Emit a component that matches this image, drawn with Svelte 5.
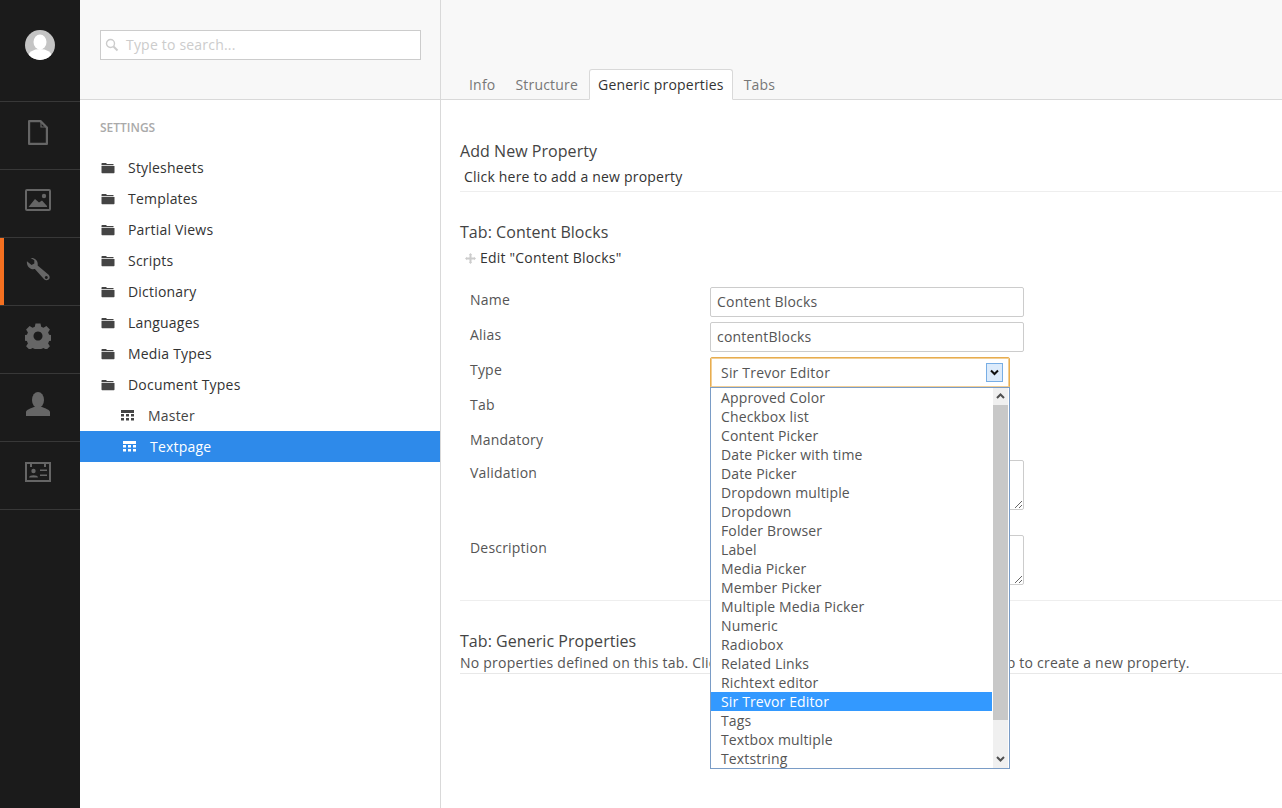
<script>
  const folders = ['Stylesheets', 'Templates', 'Partial Views', 'Scripts', 'Dictionary', 'Languages', 'Media Types', 'Document Types'];
  const tabs = ['Info', 'Structure', 'Generic properties', 'Tabs'];
  const options = ['Approved Color', 'Checkbox list', 'Content Picker', 'Date Picker with time', 'Date Picker', 'Dropdown multiple', 'Dropdown', 'Folder Browser', 'Label', 'Media Picker', 'Member Picker', 'Multiple Media Picker', 'Numeric', 'Radiobox', 'Related Links', 'Richtext editor', 'Sir Trevor Editor', 'Tags', 'Textbox multiple', 'Textstring'];
</script>

{#snippet gridIcon()}
  <svg class="grid-icon" width="13" height="11" viewBox="0 0 13 11" fill="currentColor">
    <rect x="0" y="0" width="13" height="3" />
    <rect x="0" y="4" width="3" height="2.500" /><rect x="5" y="4" width="3" height="2.500" /><rect x="10" y="4" width="3" height="2.500" />
    <rect x="0" y="8" width="3" height="2.500" /><rect x="5" y="8" width="3" height="2.500" /><rect x="10" y="8" width="3" height="2.500" />
  </svg>
{/snippet}

<div class="app">
  <nav class="rail">
    <div class="rail-top">
      <svg width="30" height="30" viewBox="0 0 30 30">
        <circle cx="15" cy="15" r="15" fill="#c4c4c4" />
        <clipPath id="av"><circle cx="15" cy="15" r="15" /></clipPath>
        <g clip-path="url(#av)" fill="#fff">
          <ellipse cx="15" cy="12" rx="6.500" ry="7.500" />
          <ellipse cx="15" cy="27" rx="12" ry="8" />
        </g>
      </svg>
    </div>
    <div class="rail-item">
      <svg width="20" height="25" viewBox="0 0 20 25" fill="none" stroke="#666" stroke-width="2.200">
        <path d="M1.100 1.100H12.500L18.900 7.500V23.900H1.100Z" stroke-linejoin="round" />
        <path d="M13 1.500V7H18.500" stroke-width="1.200" />
      </svg>
    </div>
    <div class="rail-item">
      <svg width="26" height="22" viewBox="0 0 26 22">
        <rect x="1" y="1" width="24" height="20" fill="none" stroke="#666" stroke-width="2" rx="1" />
        <circle cx="19" cy="7" r="2.200" fill="#666" />
        <path d="M3.500 18 L10 10 L14 13.500 L17 11.500 L22 17 V18Z" fill="#666" />
      </svg>
    </div>
    <div class="rail-item active">
      <svg width="24" height="24" viewBox="0 0 26 26">
        <path fill="#666" fill-rule="evenodd" d="M1 3.500 L6 7.500 L9 6 L9 2.500 L5 0 C9 -0.600 13.500 2.500 12.600 8 L24.500 18.200 C26.400 20 25.600 22.400 24.500 23.300 C23.200 24.400 21 24.600 19.600 23 L9.600 12 C4.500 13 0.400 9 1 3.500Z M22 19.600 a1.600 1.600 0 1 0 0.010 0Z" />
      </svg>
    </div>
    <div class="rail-item">
      <svg width="26" height="26" viewBox="0 0 26 26">
        <path fill="#666" fill-rule="evenodd" d="M10.500 0.500h5l.7 3.300 2.300 1 2.900 -1.800 3.500 3.500 -1.800 2.900 1 2.300 3.300 .7 v5 l-3.300 .7 -1 2.300 1.800 2.900 -3.500 3.500 -2.900 -1.800 -2.300 1 -.7 3.300 h-5 l-.7 -3.300 -2.300 -1 -2.900 1.800 -3.500 -3.500 1.800 -2.900 -1 -2.300 -3.300 -.7 v-5 l3.300 -.7 1 -2.300 -1.800 -2.900 3.500 -3.500 2.900 1.800 2.300 -1Z M13 8.500a4.500 4.500 0 1 0 .010 0Z" />
      </svg>
    </div>
    <div class="rail-item">
      <svg width="24" height="24" viewBox="0 0 24 24" fill="#666">
        <ellipse cx="12" cy="8" rx="6" ry="8" />
        <path d="M0 24V20C0 17.500 5 16.500 8 15L16 15C19 16.500 24 17.500 24 20V24Z" />
      </svg>
    </div>
    <div class="rail-item">
      <svg width="26" height="20" viewBox="0 0 26 20">
        <rect x="1" y="1" width="24" height="18" fill="none" stroke="#666" stroke-width="2" />
        <rect x="5" y="1" width="2" height="4" fill="#666" />
        <rect x="19" y="1" width="2" height="4" fill="#666" />
        <circle cx="8.500" cy="9" r="2.200" fill="#666" />
        <path d="M4 15.500 C4 12.500 13 12.500 13 15.500Z" fill="#666" />
        <rect x="15" y="7.500" width="7" height="1.500" fill="#666" />
        <rect x="15" y="12.500" width="7" height="1.500" fill="#666" />
      </svg>
    </div>
  </nav>

  <aside class="tree">
    <div class="tree-head">
      <div class="search">
        <svg width="14" height="14" viewBox="0 0 14 14" fill="none" stroke="#ccc">
          <circle cx="5.500" cy="5.500" r="4" stroke-width="1.400" />
          <path d="M8.500 8.500L12.500 12.500" stroke-width="2" />
        </svg>
        <span>Type to search...</span>
      </div>
    </div>
    <h5>SETTINGS</h5>
    <ul>
      {#each folders as f}
        <li>
          <svg width="14" height="12" viewBox="0 0 14 12" fill="#444">
            <path d="M1 1H5L6 2H12.500V3.200H0.500V1.500Z" />
            <path d="M0.500 4H13.500V10.500Q13.500 11.200 12.800 11.200H1.200Q0.500 11.200 0.500 10.500Z" />
          </svg>
          <span>{f}</span>
        </li>
      {/each}
      <li class="child">{@render gridIcon()}<span>Master</span></li>
      <li class="child selected">{@render gridIcon()}<span>Textpage</span></li>
    </ul>
  </aside>

  <main class="editor">
    <header class="tabs">
      {#each tabs as t, i}
        <div class="tab" class:on={i === 2}>{t}</div>
      {/each}
    </header>

    <section class="body">
      <div class="group add">
        <h4>Add New Property</h4>
        <p class="add-link">Click here to add a new property</p>
      </div>

      <div class="group blocks">
        <h4>Tab: Content Blocks</h4>
        <p class="edit-tab">
          <svg width="11" height="11" viewBox="0 0 11 11" fill="#ccc"><path d="M4.500 2H3.800L5.500 0L7.200 2H6.500V4.500H9V3.800L11 5.500L9 7.200V6.500H6.500V9H7.200L5.500 11L3.800 9H4.500V6.500H2V7.200L0 5.500L2 3.800V4.500H4.500Z" /></svg>
          Edit "Content Blocks"
        </p>
        <div class="form">
          <label for="p-name">Name</label>
          <input id="p-name" class="field" value="Content Blocks" />
          <label for="p-alias">Alias</label>
          <input id="p-alias" class="field" value="contentBlocks" />
          <span class="lbl">Type</span>
          <div class="select-wrap">
            <div class="select">
              <span>Sir Trevor Editor</span>
              <span class="select-btn">
                <svg width="9" height="7" viewBox="0 0 9 7" fill="none" stroke="#111" stroke-width="2"><path d="M1 1.500L4.500 5L8 1.500" /></svg>
              </span>
            </div>
            <div class="dropdown">
              <div class="opts">
                {#each options as o}
                  <div class="opt" class:hl={o === 'Sir Trevor Editor'}>{o}</div>
                {/each}
              </div>
              <div class="scroll">
                <svg class="arrow" width="9" height="6" viewBox="0 0 9 6" fill="none" stroke="#505050" stroke-width="2"><path d="M1 5L4.500 1.500L8 5" /></svg>
                <div class="track"><div class="thumb"></div></div>
                <svg class="arrow" width="9" height="6" viewBox="0 0 9 6" fill="none" stroke="#505050" stroke-width="2"><path d="M1 1L4.500 4.500L8 1" /></svg>
              </div>
            </div>
          </div>
          <span class="lbl">Tab</span>
          <div class="blank"></div>
          <span class="lbl">Mandatory</span>
          <div class="blank mand"></div>
          <span class="lbl">Validation</span>
          <textarea class="field area"></textarea>
          <span class="lbl spaced">Description</span>
          <textarea class="field area spaced"></textarea>
        </div>
      </div>

      <div class="group generic">
        <h4>Tab: Generic Properties</h4>
        <p class="none">No properties defined on this tab. Click on the "add a new property" link at the top to create a new property.</p>
      </div>
    </section>
  </main>
</div>

<style>
  :global(body) {
    margin: 0;
    background: #fff;
    overflow: hidden;
  }

  .app {
    display: flex;
    width: 1282px;
    height: 808px;
    overflow: hidden;
    font-family: "Open Sans", "Liberation Sans", sans-serif;
    font-size: 14px;
    letter-spacing: 0.2px;
    color: #555;
  }

  /* left rail */
  .rail {
    width: 80px;
    flex-shrink: 0;
    background: #1b1b1b;
  }
  .rail-top {
    height: 102px;
    padding-top: 30px;
    box-sizing: border-box;
    display: flex;
    justify-content: center;
    align-items: flex-start;
    border-bottom: 1px solid #383838;
  }
  .rail-item {
    height: 68px;
    box-sizing: border-box;
    padding: 0 4px 7px 0;
    display: flex;
    align-items: center;
    justify-content: center;
    border-bottom: 1px solid #383838;
  }
  .rail-item.active {
    padding-bottom: 3px;
    box-shadow: inset 4px 0 0 #f57020;
  }

  /* tree */
  .tree {
    width: 360px;
    flex-shrink: 0;
    border-right: 1px solid #d9d9d9;
  }
  .tree-head {
    height: 99px;
    background: #f8f8f8;
    border-bottom: 1px solid #d9d9d9;
    padding: 0 19px 0 20px;
    display: flex;
    align-items: flex-start;
  }
  .search {
    margin-top: 30px;
    width: 100%;
    height: 30px;
    box-sizing: border-box;
    background: #fff;
    border: 1px solid #ccc;
    display: flex;
    align-items: center;
    gap: 7px;
    padding: 0 0 0 4px;
    color: #ccc;
  }
  .search span {
    position: relative;
    top: -1px;
  }
  .tree h5 {
    margin: 20px 0 0 20px;
    font-size: 12px;
    line-height: 16px;
    font-weight: 600;
    letter-spacing: 0;
    color: #aaa;
  }
  .tree ul {
    list-style: none;
    margin: 16px 0 0;
    padding: 0;
  }
  .tree li {
    height: 31px;
    display: flex;
    align-items: center;
    padding-left: 21px;
    color: #333;
  }
  .tree li span {
    margin-left: 13px;
  }
  .tree li.child {
    padding-left: 41px;
    color: #444;
  }
  .tree li.child span {
    margin-left: 14px;
  }
  .tree li.selected {
    background: #2e8aea;
    color: #fff;
    padding-left: 43px;
  }
  .grid-icon {
    color: #444;
  }
  .selected .grid-icon {
    color: #fff;
  }

  /* main */
  .editor {
    flex: 1;
    min-width: 0;
  }
  .tabs {
    height: 99px;
    background: #f8f8f8;
    border-bottom: 1px solid #d9d9d9;
    padding-left: 19px;
    display: flex;
    align-items: flex-end;
  }
  .tab {
    height: 31px;
    line-height: 29px;
    padding: 0 8px;
    margin-right: 2px;
    color: #777;
    box-sizing: border-box;
    position: relative;
    top: 1px;
    border: 1px solid transparent;
  }
  .tab.on {
    background: #fff;
    color: #333;
    border: 1px solid #d9d9d9;
    border-bottom-color: #fff;
    border-radius: 3px 3px 0 0;
  }

  .body {
    padding: 40px 0 0 19px;
  }
  h4 {
    margin: 0;
    font-size: 16px;
    line-height: 22px;
    font-weight: 400;
    letter-spacing: 0.05px;
    color: #444;
  }
  .group {
    border-bottom: 1px solid #eee;
  }
  .add {
    height: 51px;
  }
  .add-link {
    margin: 5px 0 0 4px;
    line-height: 20px;
    color: #333;
  }
  .blocks {
    margin-top: 29px;
    height: 379px;
  }
  .edit-tab {
    margin: 5px 0 0 5px;
    line-height: 20px;
    color: #333;
    display: flex;
    align-items: center;
    gap: 4px;
  }
  .form {
    display: grid;
    grid-template-columns: 240px 1fr;
    margin: 19px 0 0 10px;
    row-gap: 5px;
    justify-items: start;
    align-items: start;
  }
  .form label,
  .lbl {
    line-height: 20px;
    padding-top: 3px;
    color: #555;
  }
  .field {
    display: block;
    width: 314px;
    height: 30px;
    box-sizing: border-box;
    margin: 0;
    padding: 0 6px 2px;
    font: inherit;
    letter-spacing: inherit;
    color: #555;
    background: #fff;
    border: 1px solid #ccc;
    border-radius: 2px;
    outline: none;
  }
  .area {
    height: 50px;
    resize: vertical;
  }
  .spaced {
    margin-top: 20px;
  }
  .select-wrap {
    position: relative;
    width: 300px;
    height: 30px;
  }
  .select {
    height: 31px;
    box-sizing: border-box;
    border: 1px solid #e8ad4f;
    box-shadow: inset 0 0 0 1px #f2cf96;
    border-radius: 2px;
    display: flex;
    align-items: center;
    justify-content: space-between;
    padding: 0 6px 0 10px;
    color: #555;
    background: #fff;
  }
  .select-btn {
    width: 17px;
    height: 19px;
    box-sizing: border-box;
    background: #dcebfb;
    border: 1px solid #78aee5;
    display: flex;
    align-items: center;
    justify-content: center;
  }
  .dropdown {
    position: absolute;
    top: 30px;
    left: 0;
    width: 300px;
    height: 382px;
    box-sizing: border-box;
    border: 1px solid #7a9cc6;
    background: #fff;
    display: flex;
    overflow: hidden;
    z-index: 5;
  }
  .opts {
    flex: 1;
    min-width: 0;
    margin-right: 1px;
  }
  .opt {
    height: 19px;
    line-height: 19px;
    padding-left: 10px;
    color: #555;
    white-space: nowrap;
    letter-spacing: 0.14px;
  }
  .opt.hl {
    background: #3399ff;
    color: #fff;
  }
  .scroll {
    width: 15px;
    flex-shrink: 0;
    margin-right: 1px;
    background: #f0f0f0;
    display: flex;
    flex-direction: column;
    align-items: center;
  }
  .arrow {
    flex-shrink: 0;
    margin: 5px 0 6px;
  }
  .track {
    flex: 1;
    width: 100%;
  }
  .thumb {
    height: 315px;
    background: #c8c8c8;
  }
  .blank {
    height: 30px;
  }
  .mand {
    height: 28px;
  }
  .generic {
    margin-top: 29px;
    height: 43px;
    border-bottom: 1px solid #e8e8e8;
  }
  .none {
    margin: 2px 0 0;
    line-height: 18px;
    white-space: nowrap;
    letter-spacing: 0.23px;
    color: #555;
  }
</style>
